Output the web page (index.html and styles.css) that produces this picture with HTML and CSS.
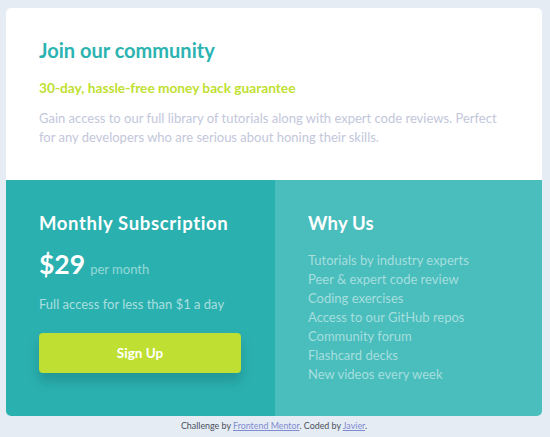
FILE: index.html
```html
<!DOCTYPE html>
<html lang="en">
<head>
<meta charset="utf-8">
<title>Single price grid</title>
<link rel="stylesheet" href="styles.css">
</head>
<body>
<main class="card">
  <section class="top">
    <h1 class="title">Join our community</h1>
    <p class="guarantee">30-day, hassle-free money back guarantee</p>
    <p class="intro">Gain access to our full library of tutorials along with expert code reviews. Perfect for any developers who are serious about honing their skills.</p>
  </section>
  <section class="bottom">
    <div class="sub">
      <h2 class="heading heading-wide">Monthly Subscription</h2>
      <p class="price"><span class="amount">$29</span><span class="per">per month</span></p>
      <p class="note">Full access for less than $1 a day</p>
      <button class="btn">Sign Up</button>
    </div>
    <div class="why">
      <h2 class="heading">Why Us</h2>
      <ul class="list">
        <li>Tutorials by industry experts</li>
        <li>Peer &amp; expert code review</li>
        <li>Coding exercises</li>
        <li>Access to our GitHub repos</li>
        <li>Community forum</li>
        <li>Flashcard decks</li>
        <li>New videos every week</li>
      </ul>
    </div>
  </section>
</main>
<footer class="attribution">Challenge by <a href="#">Frontend Mentor</a>. Coded by <a href="#">Javier</a>.</footer>
</body>
</html>
```
FILE: styles.css
```css
* { box-sizing: border-box; margin: 0; padding: 0; }
html, body { background: #e5ecf4; }
body {
  font-family: "Lato", "Liberation Sans", sans-serif;
  padding: 8px 8px 0 6px;
}
.card {
  width: 536px;
  border-radius: 5px;
  overflow: hidden;
  background: #fff;
}
.top {
  padding: 30px 33px 32px;
  height: 172px;
}
.title {
  font-size: 20px;
  line-height: 24px;
  font-weight: 700;
  color: #2bb3b1;
}
.guarantee {
  margin-top: 16px;
  font-size: 13.7px;
  line-height: 20px;
  font-weight: 700;
  color: #bfdf32;
}
.intro {
  margin-top: 11px;
  font-size: 13px;
  line-height: 19px;
  color: #c3c7db;
}
.bottom {
  display: grid;
  grid-template-columns: 269px 267px;
  height: 236px;
}
.sub {
  background: #2bb0b0;
  padding: 31px 33px 0;
}
.why {
  background: #4abdbd;
  padding: 31px 33px 0;
}
.heading {
  font-size: 18.5px;
  line-height: 24px;
  font-weight: 700;
  color: #fff;
  letter-spacing: 0.2px;
}
.heading-wide { letter-spacing: 0.65px; }
.price {
  margin-top: 13px;
  display: flex;
  align-items: baseline;
  gap: 5px;
  line-height: 32px;
}
.amount {
  font-size: 26.5px;
  font-weight: 700;
  color: #fff;
}
.per {
  font-size: 13px;
  color: #95d8d7;
}
.note {
  margin-top: 10px;
  font-size: 13px;
  line-height: 19px;
  color: #a9dfde;
}
.btn {
  display: block;
  margin-top: 19px;
  width: 202px;
  height: 40px;
  border: none;
  border-radius: 4px;
  background: #bfdf32;
  color: #fff;
  font-family: inherit;
  font-size: 13.5px;
  font-weight: 700;
  box-shadow: 0 8px 12px rgba(20, 90, 90, 0.3);
}
.list {
  list-style: none;
  margin-top: 16px;
  font-size: 13px;
  line-height: 19px;
  color: #a5dfde;
}
.attribution {
  width: 536px;
  text-align: center;
  font-size: 8.9px;
  line-height: 20px;
  color: #4b4f5c;
}
.attribution a { color: #7f8bd1; }
```
